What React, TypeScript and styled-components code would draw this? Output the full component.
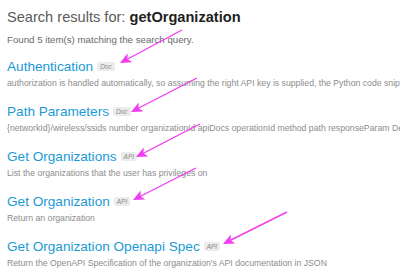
import React from 'react';
import styled, { createGlobalStyle } from 'styled-components';

const GlobalStyle = createGlobalStyle`
  html, body {
    margin: 0;
    padding: 0;
    background: #ffffff;
    overflow: hidden;
  }
  body {
    font-family: "Liberation Sans", Arial, sans-serif;
  }
`;

type Result = {
  title: string;
  kind: 'Doc' | 'API';
  description: string;
};

const results: Result[] = [
  {
    title: 'Authentication',
    kind: 'Doc',
    description:
      'authorization is handled automatically, so assuming the right API key is supplied, the Python code snippet will work as expected.',
  },
  {
    title: 'Path Parameters',
    kind: 'Doc',
    description:
      '{networkId}/wireless/ssids number organizationId apiDocs operationId method path responseParam Description',
  },
  {
    title: 'Get Organizations',
    kind: 'API',
    description: 'List the organizations that the user has privileges on',
  },
  {
    title: 'Get Organization',
    kind: 'API',
    description: 'Return an organization',
  },
  {
    title: 'Get Organization Openapi Spec',
    kind: 'API',
    description:
      "Return the OpenAPI Specification of the organization's API documentation in JSON",
  },
];

// annotation arrows drawn over the screenshot
const arrows = [
  { x1: 182, y1: 30, x2: 122, y2: 62 },
  { x1: 197, y1: 78, x2: 133, y2: 111 },
  { x1: 200, y1: 124, x2: 138, y2: 156 },
  { x1: 196, y1: 168, x2: 135, y2: 199 },
  { x1: 287, y1: 212, x2: 225, y2: 243 },
];

const App: React.FC = () => {
  return (
    <>
      <GlobalStyle />
      <Page>
        <Heading>
          Search results for: <Query>getOrganization</Query>
        </Heading>
        <Summary>Found 5 item(s) matching the search query.</Summary>
        <List>
          {results.map(result => (
            <Item key={result.title}>
              <TitleRow>
                <Title>{result.title}</Title>
                <Badge>{result.kind}</Badge>
              </TitleRow>
              <Description>{result.description}</Description>
            </Item>
          ))}
        </List>
      </Page>
      <Overlay width="400" height="277" viewBox="0 0 400 277">
        <defs>
          <marker
            id="head"
            viewBox="0 0 10 10"
            refX="8"
            refY="5"
            markerWidth="8"
            markerHeight="8"
            orient="auto-start-reverse"
          >
            <path d="M0 0.5 L10 5 L0 9.5 L2.5 5 Z" fill="#f23cf2" />
          </marker>
        </defs>
        {arrows.map((a, i) => (
          <line
            key={i}
            x1={a.x1}
            y1={a.y1}
            x2={a.x2}
            y2={a.y2}
            stroke="#f23cf2"
            strokeWidth="1.4"
            markerEnd="url(#head)"
          />
        ))}
      </Overlay>
    </>
  );
};

export default App;

const Page = styled.div`
  width: 400px;
  height: 277px;
  box-sizing: border-box;
  padding: 6px 0 0 7px;
  overflow: hidden;
`;

const Heading = styled.h1`
  margin: 0 0 5px;
  font-size: 14.6px;
  line-height: 22px;
  font-weight: 400;
  color: #5a5a5a;
  white-space: nowrap;
`;

const Query = styled.span`
  font-weight: 700;
  color: #1f1f1f;
`;

const Summary = styled.p`
  margin: 0 0 10px;
  font-size: 9.7px;
  line-height: 14px;
  color: #6a6a6a;
  white-space: nowrap;
`;

const List = styled.div`
  display: flex;
  flex-direction: column;
  gap: 13px;
`;

const Item = styled.div`
  display: flex;
  flex-direction: column;
`;

const TitleRow = styled.div`
  display: flex;
  align-items: center;
  gap: 4px;
  height: 20px;
`;

const Title = styled.span`
  font-size: 13.6px;
  line-height: 20px;
  color: #1b9ad6;
  white-space: nowrap;
`;

const Badge = styled.span`
  display: inline-flex;
  align-items: center;
  height: 9px;
  padding: 0 3px;
  border-radius: 2px;
  background: #ececec;
  color: #8a8a8a;
  font-size: 6.5px;
  font-style: italic;
  margin-top: -1px;
`;

const Description = styled.div`
  font-size: 8.7px;
  line-height: 12px;
  color: #8c8c8c;
  white-space: nowrap;
  overflow: hidden;
`;

const Overlay = styled.svg`
  position: absolute;
  left: 0;
  top: 0;
  pointer-events: none;
`;
